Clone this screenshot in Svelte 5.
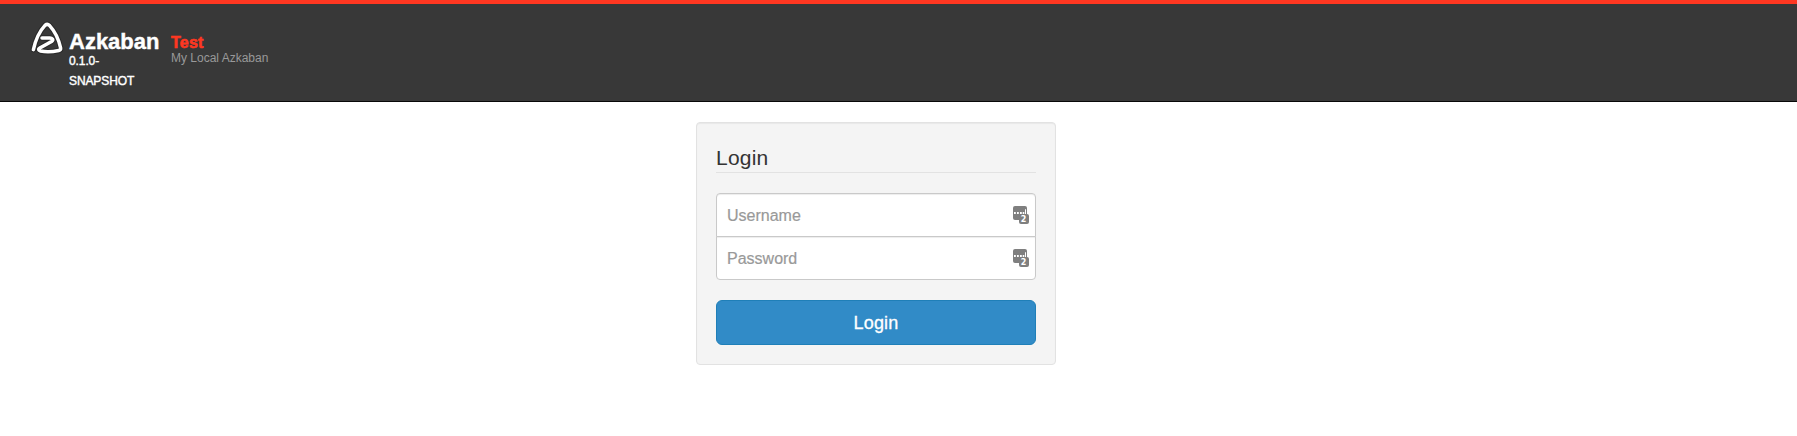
<script lang="ts">
  let username = $state('')
  let password = $state('')

  const version = ['0.1.0-', 'SNAPSHOT']
  const logoPath =
    'M3.4 29.6C5.3 21 9.6 11.2 15 5.4Q17.3 3.4 19.6 5.6C25 11.4 28.7 19.6 30.6 27.8Q31 30 28.8 30.5C22.5 31.9 15.5 32.1 10.5 31C8.2 30.4 8 29.2 9.8 28.1L22 21.2C23.8 19.8 22.3 18.3 19.8 18.1L12 18.1'
</script>

{#snippet keyIcon()}
  <svg class="key-icon" width="16" height="18" viewBox="0 0 16 18" aria-hidden="true">
    <rect width="14" height="14" rx="2" fill="#7f7f7f" />
    <path d="M1 6h1.8v2H1zM4 6h1.8v2H4zM7 6h1.8v2H7zM9.7 6h1.6v2H9.7zM12 3.3h1V8h-1z" fill="#fff" />
    <rect x="6" y="8" width="10" height="10" rx="2" fill="#7f7f7f" />
    <text x="10.6" y="16" text-anchor="middle">2</text>
  </svg>
{/snippet}

<header class="navbar">
  <svg class="logo" width="34" height="36" viewBox="0 0 34 36" aria-hidden="true">
    <path class="shade" d={logoPath} />
    <path class="line" d={logoPath} />
  </svg>
  <div class="brand">
    <span class="name">Azkaban</span>
    {#each version as part}
      <span class="version">{part}</span>
    {/each}
  </div>
  <div class="instance">
    <span class="label">Test</span>
    <span class="description">My Local Azkaban</span>
  </div>
</header>

<main>
  <form class="login" onsubmit={(e) => e.preventDefault()}>
    <h1>Login</h1>
    <div class="fields">
      <div class="field">
        <input type="text" placeholder="Username" bind:value={username} />
        {@render keyIcon()}
      </div>
      <div class="field">
        <input type="password" placeholder="Password" bind:value={password} />
        {@render keyIcon()}
      </div>
    </div>
    <button type="submit">Login</button>
  </form>
</main>

<style>
  :global(body) {
    background: #fff;
    font-family: "Liberation Sans", Arial, sans-serif;
  }

  .navbar {
    box-sizing: border-box;
    height: 102px;
    display: flex;
    align-items: flex-start;
    padding: 16px 30px 0;
    background: #383838;
    border-top: 4px solid #ff3721;
    border-bottom: 1px solid #080808;
  }

  .logo {
    flex: none;
    fill: none;
    stroke-linecap: round;
    stroke-linejoin: round;
  }

  .shade {
    stroke: #292929;
    stroke-width: 5.5;
  }

  .line {
    stroke: #fff;
    stroke-width: 3.5;
  }

  .brand {
    box-sizing: border-box;
    display: flex;
    flex-direction: column;
    width: 107px;
    padding: 10px 0 0 5px;
    color: #fff;
  }

  .name {
    font-size: 22px;
    line-height: 24px;
    font-weight: bold;
    -webkit-text-stroke: 0.4px #fff;
  }

  .version {
    font-size: 12px;
    line-height: 20px;
    letter-spacing: -0.1px;
    -webkit-text-stroke: 0.4px #fff;
  }

  .version:nth-child(2) {
    margin-top: -3px;
  }

  .instance {
    display: flex;
    flex-direction: column;
    padding-top: 14px;
  }

  .label {
    color: #ff3721;
    font-size: 16px;
    line-height: 17px;
    font-weight: bold;
    letter-spacing: 0.2px;
    -webkit-text-stroke: 0.6px #ff3721;
  }

  .description {
    color: #999;
    font-size: 12px;
    line-height: 14px;
  }

  main {
    display: flex;
    justify-content: center;
    padding: 20px 45px 0 0;
  }

  .login {
    box-sizing: border-box;
    width: 360px;
    height: 243px;
    padding: 19px;
    background: #f4f4f4;
    border: 1px solid #e2e2e2;
    border-radius: 4px;
    box-shadow: inset 0 1px 1px rgba(0, 0, 0, 0.05);
  }

  h1 {
    box-sizing: border-box;
    height: 31px;
    margin: 0 0 20px;
    padding-top: 4px;
    border-bottom: 1px solid #e2e2e2;
    color: #333;
    font-size: 21px;
    line-height: 24px;
    font-weight: normal;
    letter-spacing: 0.2px;
  }

  .fields {
    display: flex;
    flex-direction: column;
    margin-bottom: 20px;
  }

  .field {
    box-sizing: border-box;
    height: 44px;
    display: flex;
    align-items: center;
    padding: 0 6px 0 10px;
    background: #fff;
    border: 1px solid #c9c9c9;
    border-radius: 4px 4px 0 0;
    box-shadow: inset 0 1px 1px rgba(0, 0, 0, 0.075);
  }

  .field + .field {
    margin-top: -1px;
    border-radius: 0 0 4px 4px;
  }

  input {
    flex: 1;
    min-width: 0;
    padding: 2px 0 0;
    border: none;
    outline: none;
    background: none;
    color: #555;
    font: 16px "Liberation Sans", Arial, sans-serif;
  }

  input::placeholder {
    color: #999;
    opacity: 1;
    -webkit-text-stroke: 0.2px #999;
  }

  .key-icon {
    flex: none;
  }

  .key-icon text {
    fill: #fff;
    font: bold 8px "DejaVu Sans", sans-serif;
  }

  button {
    width: 100%;
    height: 45px;
    padding: 1px 0 0;
    background: #318bc7;
    border: 1px solid #1f7fb8;
    border-radius: 6px;
    color: #fff;
    font: 18px "Liberation Sans", Arial, sans-serif;
    letter-spacing: 0.2px;
    -webkit-text-stroke: 0.3px #fff;
    cursor: pointer;
  }
</style>
